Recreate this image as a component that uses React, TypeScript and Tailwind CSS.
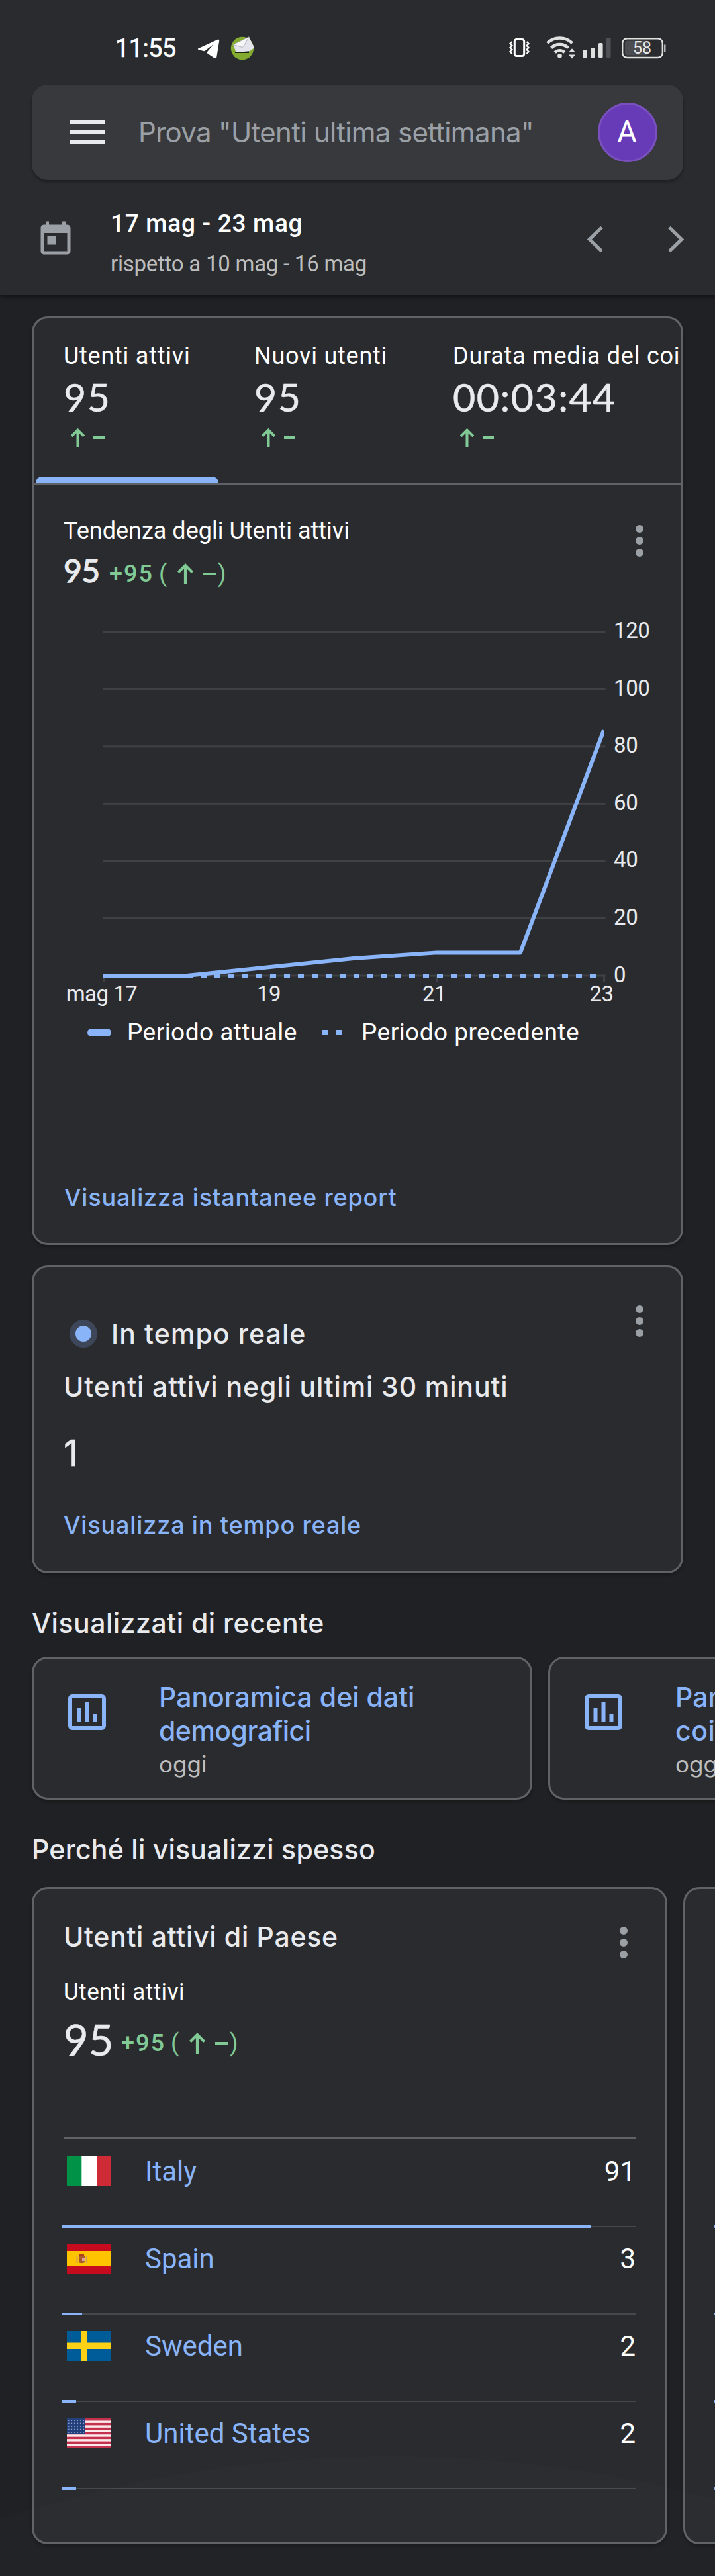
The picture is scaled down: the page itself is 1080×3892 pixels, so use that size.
import type { ReactNode } from 'react';

function VibrateWifiSignalBattery() {
  return (
    <svg width="240" height="44" viewBox="768 51 240 44" fill="none">
      {/* vibrate */}
      <rect x="777.3" y="59.5" width="14.4" height="25" rx="3" stroke="#fff" strokeWidth="3" />
      <path d="M773.5 63l-3 3 3 3-3 3 3 3-3 3 3 3M795.5 63l3 3-3 3 3 3-3 3 3 3-3 3" stroke="#fff" strokeWidth="2.4" />
      {/* wifi */}
      <g stroke="#e0e0e0" strokeWidth="4.6">
        <path d="M826.6 65.2a27 27 0 0 1 37.8 0" />
        <path d="M832.6 72.4a18.4 18.4 0 0 1 25.8 0" />
        <path d="M838.2 79.2a10.6 10.6 0 0 1 14.6 0" />
      </g>
      <circle cx="845.5" cy="84.3" r="3.4" fill="#e0e0e0" />
      <path d="M864 73.2l5 5.8h-10zM864 88.4l5-5.8h-10z" fill="#e0e0e0" />
      {/* signal */}
      <g fill="#e0e0e0">
        <rect x="880" y="75" width="6.6" height="12" rx="1.5" />
        <rect x="892" y="72" width="6.6" height="15" rx="1.5" />
        <rect x="904" y="65" width="6.6" height="22" rx="1.5" />
      </g>
      <rect x="916" y="57" width="6.6" height="30" rx="1.5" fill="#505154" />
      {/* battery */}
      <rect x="944" y="61.5" width="35" height="22" rx="4" fill="#4b4c4f" />
      <rect x="940.2" y="58.2" width="60.6" height="28.8" rx="7" stroke="#e0e0e0" strokeWidth="2.4" />
      <path d="M1004.2 67.5v10.5" stroke="#b5b5b7" strokeWidth="2.6" />
      <text x="970" y="81.2" textAnchor="middle" fontFamily="Roboto, sans-serif" fontSize="25" fill="#e6e6e6">58</text>
    </svg>
  );
}

function TelegramAndMail() {
  return (
    <svg width="90" height="40" viewBox="297 52 90 40">
      <path d="M299.5 72.2L328.8 58.8c1.6-.7 2.6.2 2.4 1.9l-3.9 24.2c-.3 1.9-2.2 2.7-3.8 1.7l-9.7-6.6c-1.2-.9-1.2-2.2-.2-3.4l8.8-10.6-12.6 9.6c-.9.6-1.7.7-2.7.4l-7.2-2.1c-1.2-.4-1.500-1.200-.4-1.700z" fill="#fff" />
      <circle cx="366" cy="72" r="17.2" fill="#83ab30" />
      <path d="M355 77.500l21-2v3.500h-21z" fill="#1c2410" />
      <path d="M352.300 66.500L376 54.800l8 16.500-7 5-20.500 1.700z" fill="#e4e5ec" />
      <path d="M352.300 66.500L376 54.800l-8.500 14.700c-.5.9-1.800 1.100-2.700.6z" fill="#f6f6f8" stroke="#a9aab2" strokeWidth=".9" />
    </svg>
  );
}

function Dots({ className }: { className: string }) {
  return (
    <svg width="12" height="48" viewBox="0 0 12 48" fill="#9aa0a6" className={className}>
      <circle cx="6" cy="6" r="6" />
      <circle cx="6" cy="24" r="6" />
      <circle cx="6" cy="42" r="6" />
    </svg>
  );
}

function Arrow({ w, h, stroke }: { w: number; h: number; stroke: number }) {
  return (
    <svg width={w} height={h} viewBox="0 0 24 32" fill="none" stroke="#81c995" strokeWidth={stroke} className="shrink-0">
      <path d="M12 32V3M1.400 13.600L12 3l10.600 10.600" />
    </svg>
  );
}

function Trend({ className }: { className: string }) {
  return (
    <div className={`flex items-center text-[36px] leading-[44px] text-[#81c995] ${className}`}>
      <span className="w-[75px] font-medium tracking-[2px]">+95</span>
      <span className="w-[28px]">(</span>
      <Arrow w={24} h={32} stroke={4.2} />
      <span className="ml-[15px] h-[4px] w-[19px] bg-[#81c995]" />
      <span className="ml-[3px]">)</span>
    </div>
  );
}

function Metric({ label, value, className, active }: { label: string; value: string; className: string; active?: boolean }) {
  return (
    <div className={`flex shrink-0 flex-col ${className}`}>
      <div className="flex flex-1 flex-col px-[42px] pt-[35px]">
        <span className="text-[36px] leading-[44px] tracking-[0.75px] whitespace-nowrap text-white">{label}</span>
        <span className="mt-[10px] font-[Lato] text-[59px] leading-[60px] tracking-[1.5px] text-[#e8eaed] [-webkit-text-stroke:0.5px_#e8eaed]">{value}</span>
        <div className="mt-[9px] flex h-[44px] items-center gap-[13px] pl-[11px]">
          <Arrow w={21} h={28} stroke={4.6} />
          <span className="h-[4px] w-[17px] bg-[#81c995]" />
        </div>
      </div>
      <div className={active ? 'h-[10px] rounded-t-[9px] bg-[#8ab4f8]' : 'h-[10px]'} />
    </div>
  );
}

function Card({ className, children }: { className: string; children?: ReactNode }) {
  return (
    <section className={`shrink-0 overflow-hidden rounded-[24px] border-[3px] border-[#5f6368] bg-[#2a2b2e] shadow-[0_3px_4px_rgba(0,0,0,0.25)] ${className}`}>
      {children}
    </section>
  );
}

const yFor = (v: number) => 1474 - (v / 20) * 86.55;
const days = [0, 0, 3, 6, 8, 8, 85.7];
const ticks = [120, 100, 80, 60, 40, 20, 0];
const dates: [number, string][] = [[153.5, 'mag 17'], [406, '19'], [656, '21'], [908.5, '23']];

function TrendChart() {
  return (
    <svg width="978" height="638" viewBox="51 900 978 638" className="mt-[10px] block" fontFamily="Roboto, sans-serif" fontSize="33" fill="#e8eaed">
      <defs>
        <clipPath id="plot"><rect x="156" y="940" width="756" height="550" /></clipPath>
      </defs>
      {ticks.map((t) => (
        <g key={t}>
          <rect x="156" y={yFor(t) - 1.5} width="758.5" height="3" fill="#3f4144" />
          <text x="927" y={yFor(t) + 9.5} letterSpacing="-0.4">{t}</text>
        </g>
      ))}
      {[156, 408, 660, 912].map((x) => (
        <rect key={x} x={x - 1} y="1474" width="3" height="9" fill="#3f4144" />
      ))}
      {dates.map(([x, d]) => (
        <text key={d} x={x} y="1513" textAnchor="middle" letterSpacing="-0.5">{d}</text>
      ))}
      <g clipPath="url(#plot)" fill="none" stroke="#8ab4f8" strokeWidth="6">
        <path d="M156 1474H912" strokeDasharray="9 12" />
        <polyline points={days.map((v, i) => `${156 + i * 126},${yFor(v)}`).join(' ')} strokeLinejoin="round" />
      </g>
    </svg>
  );
}

function RecentCard({ lines, tracking }: { lines: [string, string]; tracking: string }) {
  return (
    <Card className="flex h-[216px] w-[756px]">
      <svg width="57" height="54" viewBox="0 0 57 54" className="mt-[54px] ml-[52px] shrink-0" fill="#8ab4f8">
        <rect x="3" y="3" width="51" height="48" rx="3" fill="none" stroke="#8ab4f8" strokeWidth="6" />
        <rect x="13.5" y="21" width="6" height="21" />
        <rect x="25.5" y="12" width="6" height="30" />
        <rect x="37.5" y="30" width="6" height="12" />
      </svg>
      <div className="ml-[80px] flex flex-col pt-[33px] font-[Inter] whitespace-nowrap">
        <span className="text-[41px] leading-[51px] font-medium text-[#8ab4f8]">{lines[0]}</span>
        <span className={`text-[41px] leading-[51px] font-medium text-[#8ab4f8] ${tracking}`}>{lines[1]}</span>
        <span className="mt-[2px] text-[35px] leading-[44px] text-[#bdbdbd]">oggi</span>
      </div>
    </Card>
  );
}

const flags = {
  it: (
    <>
      <rect width="67" height="45" fill="#fff" />
      <rect width="22.3" height="45" fill="#009246" />
      <rect x="45.5" width="21.5" height="45" fill="#ce2b37" />
    </>
  ),
  es: (
    <>
      <rect width="67" height="45" fill="#c60b1e" />
      <rect y="11" width="67" height="23" fill="#ffc400" />
      <path d="M18 19c0-3 9-3 9 0v8c0 3-9 3-9 0z" fill="#ad5a2a" />
      <path d="M15.5 19v10M30 19v10" stroke="#d0a05a" strokeWidth="2" />
      <path d="M19 15.5h7v3h-7z" fill="#b0401c" />
      <rect x="23" y="21" width="4" height="5" fill="#d7a3a8" />
    </>
  ),
  se: (
    <>
      <rect width="67" height="45" fill="#005b99" />
      <rect x="21.5" width="9" height="45" fill="#fcd116" />
      <rect y="17.5" width="67" height="9.5" fill="#fcd116" />
    </>
  ),
  us: (
    <>
      <rect width="67" height="45" fill="#fbe9ec" />
      {[0, 1, 2, 3, 4, 5, 6].map((i) => (
        <rect key={i} y={i * 6.92} width="67" height="3.46" fill="#c4314c" />
      ))}
      <rect width="28" height="24" fill="#24407c" />
      {[0, 1, 2, 3, 4].map((r) =>
        [0, 1, 2, 3, 4, 5].map((c) => <circle key={`${r}${c}`} cx={2.8 + c * 4.5} cy={3 + r * 4.5} r=".9" fill="#8fa0c8" />),
      )}
    </>
  ),
};

const countries = [
  { code: 'it', name: 'Italy', users: 91, bar: 'w-[798px]' },
  { code: 'es', name: 'Spain', users: 3, bar: 'w-[30px]' },
  { code: 'se', name: 'Sweden', users: 2, bar: 'w-[21px]' },
  { code: 'us', name: 'United States', users: 2, bar: 'w-[21px]' },
] as const;

export default function App() {
  return (
    <div className="relative h-[3892px] w-[1080px] overflow-hidden bg-[#202124] font-[Roboto]">
      <header className="h-[446px] bg-[#2a2b2e] shadow-[0_2px_6px_rgba(0,0,0,0.5)]">
        <div className="flex h-[128px] items-center pt-[18px] pr-[72px] pl-[174px]">
          <span className="w-[123px] text-[38px] leading-[44px] tracking-[-0.6px] text-white [-webkit-text-stroke:0.6px_white]">11:55</span>
          <TelegramAndMail />
          <div className="ml-auto">
            <VibrateWifiSignalBattery />
          </div>
        </div>
        <div className="mx-12 flex h-[144px] items-center rounded-[24px] bg-[#38393c] pr-[39px] pl-[57px] shadow-[0_3px_4px_rgba(0,0,0,0.3)]">
          <div className="flex w-[54px] flex-col gap-[9px]">
            <span className="h-[6px] bg-[#e8eaed]" />
            <span className="h-[6px] bg-[#e8eaed]" />
            <span className="h-[6px] bg-[#e8eaed]" />
          </div>
          <span className="ml-[50px] font-[Inter] text-[42px] leading-[50px] tracking-[-0.67px] whitespace-nowrap text-[#9aa0a6]">Prova "Utenti ultima settimana"</span>
          <span className="ml-auto flex size-[90px] items-center justify-center rounded-full border-[3px] border-[#7950bd] bg-[#673ab7] pr-[2px] pb-[3px] text-[46px] leading-[50px] text-white">A</span>
        </div>
        <div className="flex pt-[44px] pl-[54px]">
          <svg width="60" height="60" viewBox="0 0 24 24" fill="#9aa0a6" className="mt-[16px]">
            <path d="M19 3h-1V1h-2v2H8V1H6v2H5c-1.110 0-1.990.9-1.990 2L3 19c0 1.100.890 2 2 2h14c1.100 0 2-.9 2-2V5c0-1.100-.9-2-2-2zm0 16H5V8h14v11zM7 10h5v5H7z" />
          </svg>
          <div className="ml-[53px] flex flex-col">
            <span className="text-[37px] leading-[44px] font-medium tracking-[0.7px] text-white">17 mag - 23 mag</span>
            <span className="mt-[17px] text-[33px] leading-[44px] tracking-[-0.25px] text-[#bdbdbd]">rispetto a 10 mag - 16 mag</span>
          </div>
          <svg width="146" height="42" viewBox="887 341 146 42" fill="none" stroke="#9aa0a6" strokeWidth="5.2" className="mt-[25px] mr-[47px] ml-auto">
            <path d="M909 343.500L890.500 361.500 909 379.500M1011 343.500l18.500 18-18.500 18" />
          </svg>
        </div>
      </header>

      <main className="flex flex-col pt-[32px] pl-12">
        <Card className="h-[1403px] w-[984px]">
          <div className="flex h-[252px] gap-[12px] overflow-hidden border-b-[3px] border-[#5f6368] pl-[3px]">
            <Metric label="Utenti attivi" value="95" className="w-[276px]" active />
            <Metric label="Nuovi utenti" value="95" className="w-[288px]" />
            <Metric label="Durata media del coinvolgimento" value="00:03:44" className="w-[640px]" />
          </div>
          <div className="flex h-[157px] justify-between pr-[57px] pl-[45px]">
            <div className="flex flex-col pt-[47px]">
              <span className="text-[36px] leading-[44px] text-white">Tendenza degli Utenti attivi</span>
              <div className="mt-[10px] flex h-[56px] items-center">
                <span className="w-[69px] font-[Lato] text-[48px] leading-[56px] tracking-[-0.5px] text-[#e8eaed] [-webkit-text-stroke:1.4px_#e8eaed]">95</span>
                <Trend className="pt-[9px]" />
              </div>
            </div>
            <Dots className="mt-[60px]" />
          </div>
          <TrendChart />
          <div className="flex items-center pl-[81px] text-[37px] leading-[44px] tracking-[0.46px] whitespace-nowrap text-white">
            <span className="h-[12px] w-[36px] rounded-full bg-[#8ab4f8]" />
            <span className="ml-[24px] w-[294px]">Periodo attuale</span>
            <span className="h-[8px] w-[9px] bg-[#8ab4f8]" />
            <span className="ml-[12px] h-[8px] w-[9px] bg-[#8ab4f8]" />
            <span className="ml-[30px]">Periodo precedente</span>
          </div>
          <div className="mt-[205px] pl-[46px] font-[Inter] text-[36px] leading-[44px] font-medium tracking-[0.84px] text-[#8ab4f8]">Visualizza istantanee report</div>
        </Card>

        <Card className="mt-[31px] flex h-[465px] w-[984px] justify-between pr-[57px] pl-[45px] font-[Inter]">
          <div className="flex flex-col pt-[75px]">
            <div className="flex items-center pl-[9px]">
              <span className="flex size-[42px] items-center justify-center rounded-full bg-[#3e475a]">
                <span className="size-[24px] rounded-full bg-[#8ab4f8]" />
              </span>
              <span className="ml-[21px] text-[41px] leading-[50px] font-medium tracking-[1.1px] text-[#e8eaed]">In tempo reale</span>
            </div>
            <span className="mt-[30px] text-[41px] leading-[50px] font-medium tracking-[0.88px] whitespace-nowrap text-[#e8eaed]">Utenti attivi negli ultimi 30 minuti</span>
            <span className="mt-[45px] text-[55px] leading-[60px] text-[#e8eaed] [-webkit-text-stroke:0.5px_#e8eaed]">1</span>
            <span className="mt-[57px] text-[36px] leading-[44px] font-medium tracking-[0.85px] text-[#8ab4f8]">Visualizza in tempo reale</span>
          </div>
          <Dots className="mt-[57px]" />
        </Card>

        <h2 className="mt-[50px] font-[Inter] text-[41px] leading-[50px] font-medium tracking-[0.5px] text-[#e8eaed]">Visualizzati di recente</h2>
        <div className="mt-[26px] flex gap-6">
          <RecentCard lines={['Panoramica dei dati', 'demografici']} tracking="tracking-[-0.5px]" />
          <RecentCard lines={['Panoramica del', 'coinvolgimento']} tracking="tracking-[0.5px]" />
        </div>

        <h2 className="mt-[50px] font-[Inter] text-[41px] leading-[50px] font-medium tracking-[0.25px] text-[#e8eaed]">Perché li visualizzi spesso</h2>
        <div className="mt-[32px] flex gap-6">
          <Card className="h-[993px] w-[960px] px-[45px]">
            <div className="flex justify-between pr-[12px]">
              <div className="flex flex-col pt-[47px]">
                <span className="font-[Inter] text-[41px] leading-[50px] font-medium tracking-[0.7px] text-[#e8eaed]">Utenti attivi di Paese</span>
                <span className="mt-[37px] text-[35px] leading-[44px] tracking-[0.5px] text-white">Utenti attivi</span>
                <div className="mt-[14px] flex h-[70px] items-center">
                  <span className="w-[87px] font-[Lato] text-[65px] leading-[70px] text-[#e8eaed] [-webkit-text-stroke:0.5px_#e8eaed]">95</span>
                  <Trend className="pt-[11px]" />
                </div>
              </div>
              <Dots className="mt-[57px]" />
            </div>
            <div className="mt-[113px] h-[3px] bg-[#5f6368]" />
            {countries.map((c) => (
              <div key={c.code} className="flex h-[132px] flex-col">
                <div className="flex h-[97px] items-center pl-[5px] text-[42px] leading-[50px]">
                  <svg width="67" height="45" viewBox="0 0 67 45">{flags[c.code]}</svg>
                  <span className="ml-[51px] text-[#8ab4f8]">{c.name}</span>
                  <span className="ml-auto text-white">{c.users}</span>
                </div>
                <div className="-mb-[2px] -ml-[2px] mt-auto flex items-center">
                  <span className={`h-[4px] bg-[#8ab4f8] ${c.bar}`} />
                  <span className="h-[2px] flex-1 bg-[#47484b]" />
                </div>
              </div>
            ))}
          </Card>
          <Card className="flex h-[993px] w-[960px] flex-col px-[43px] pt-[378px]">
            {countries.map((c) => (
              <div key={c.code} className="flex h-[132px] flex-col justify-end">
                <span className="-mb-[2px] h-[4px] w-[400px] bg-[#8ab4f8]" />
              </div>
            ))}
          </Card>
        </div>
      </main>

      {/* touch glow along the bottom edge */}
      <div className="pointer-events-none absolute top-[3711px] left-[-1281px] size-[3742px] rounded-full bg-white/[0.012]" />
    </div>
  );
}
